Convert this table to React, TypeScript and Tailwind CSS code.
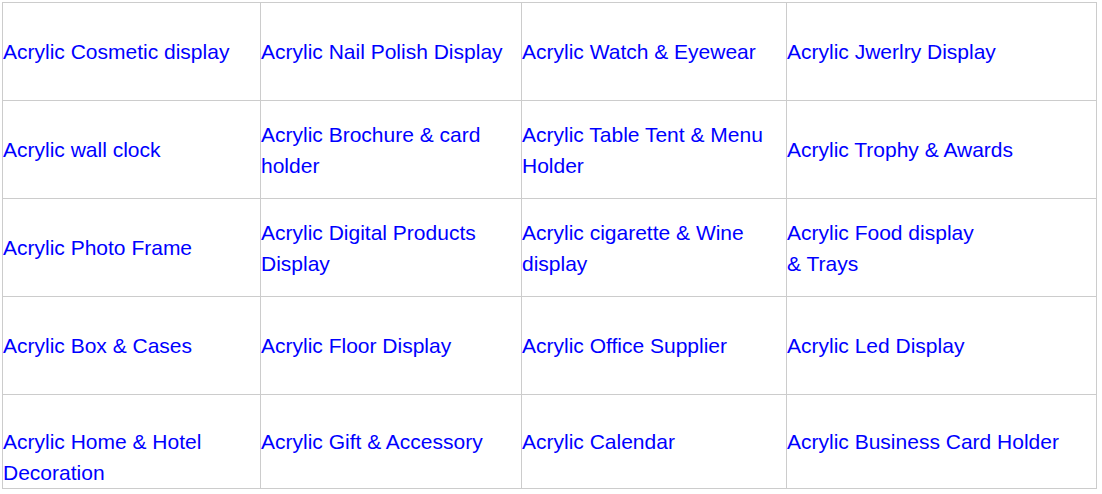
import { ReactNode } from "react";

type Cell = { text: ReactNode; bottom?: boolean };

const rows: Cell[][] = [
  [
    { text: "Acrylic Cosmetic display" },
    { text: "Acrylic Nail Polish Display" },
    { text: "Acrylic Watch & Eyewear" },
    { text: "Acrylic Jwerlry Display" },
  ],
  [
    { text: "Acrylic wall clock" },
    { text: "Acrylic Brochure & card holder" },
    { text: "Acrylic Table Tent & Menu Holder" },
    { text: "Acrylic Trophy & Awards" },
  ],
  [
    { text: "Acrylic Photo Frame" },
    { text: "Acrylic Digital Products Display" },
    { text: "Acrylic cigarette & Wine display" },
    {
      text: (
        <>
          Acrylic Food display
          <br />& Trays
        </>
      ),
    },
  ],
  [
    { text: "Acrylic Box & Cases" },
    { text: "Acrylic Floor Display" },
    { text: "Acrylic Office Supplier" },
    { text: "Acrylic Led Display" },
  ],
  [
    { text: "Acrylic Home & Hotel Decoration", bottom: true },
    { text: "Acrylic Gift & Accessory" },
    { text: "Acrylic Calendar" },
    { text: "Acrylic Business Card Holder" },
  ],
];

export default function App() {
  return (
    <div className="min-h-[494px] w-[1102px] bg-white pl-[2px] pt-[2px] font-['Liberation_Sans',Arial,sans-serif]">
      <div className="grid w-[1095px] grid-cols-[258px_261px_265px_310px] grid-rows-[98px_98px_98px_98px_94px] border-l border-t border-[#cccccc]">
        {rows.map((row, r) =>
          row.map((cell, c) => (
            <div key={`${r}-${c}`} className="flex items-center border-b border-r border-[#cccccc]">
              <a
                href="#"
                className={`text-[21px] leading-[31px] text-[#0000ff] ${cell.bottom ? "self-end" : ""}`}
              >
                {cell.text}
              </a>
            </div>
          ))
        )}
      </div>
    </div>
  );
}
